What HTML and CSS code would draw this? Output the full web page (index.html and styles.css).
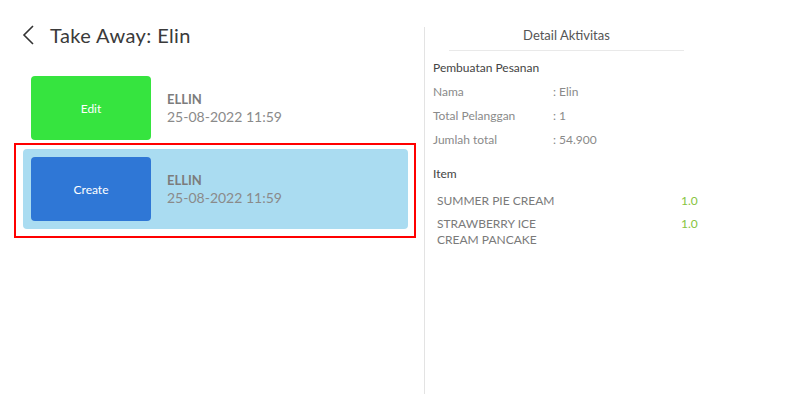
FILE: index.html
```html
<!DOCTYPE html>
<html>
<head>
<meta charset="utf-8">
<link rel="stylesheet" href="styles.css">
</head>
<body>
<div class="page">
  <div class="left">
    <div class="header">
      <svg class="back" width="12" height="20" viewBox="0 0 12 20"><path d="M11 1 L2 10 L11 19" fill="none" stroke="#333" stroke-width="1.6"/></svg>
      <span class="title">Take Away: Elin</span>
    </div>
    <div class="list">
      <div class="card">
        <div class="btn btn-edit">Edit</div>
        <div class="info">
          <div class="name">ELLIN</div>
          <div class="date">25-08-2022 11:59</div>
        </div>
      </div>
      <div class="card selected">
        <div class="btn btn-create">Create</div>
        <div class="info">
          <div class="name">ELLIN</div>
          <div class="date">25-08-2022 11:59</div>
        </div>
      </div>
    </div>
  </div>
  <div class="right">
    <div class="panel-title">Detail Aktivitas</div>
    <div class="section">Pembuatan Pesanan</div>
    <div class="row"><span class="label">Nama</span><span class="value">: Elin</span></div>
    <div class="row"><span class="label">Total Pelanggan</span><span class="value">: 1</span></div>
    <div class="row"><span class="label">Jumlah total</span><span class="value">: 54.900</span></div>
    <div class="section item-head">Item</div>
    <div class="item"><span class="item-name">SUMMER PIE CREAM</span><span class="qty">1.0</span></div>
    <div class="item"><span class="item-name">STRAWBERRY ICE<br>CREAM PANCAKE</span><span class="qty">1.0</span></div>
  </div>
</div>
</body>
</html>
```

FILE: styles.css
```css
* { box-sizing: border-box; }
html, body { margin: 0; padding: 0; background: #fff; }
body { font-family: "Lato", "Noto Sans", sans-serif; width: 790px; height: 394px; overflow: hidden; }
.page { display: flex; height: 394px; }
.left { width: 424px; flex: none; }
.header { display: flex; align-items: center; height: 36px; margin-top: 17px; padding-left: 22px; }
.back { display: block; margin-right: 16px; }
.title { font-size: 20px; color: #3a3a3a; letter-spacing: 0.4px; }
.list { display: flex; flex-direction: column; gap: 1px; margin-top: 15px; width: 385px; margin-left: 23px; }
.card { position: relative; display: flex; align-items: center; padding: 8px; border-radius: 4px; height: 80px; }
.card.selected { background: #aadcf1; }
.card.selected::after { content: ""; position: absolute; top: -6px; left: -9px; right: -8px; bottom: -9px; border: 2px solid #ff0000; }
.btn { width: 120px; height: 64px; border-radius: 4px; display: flex; align-items: center; justify-content: center; color: #fff; font-size: 12px; }
.btn-edit { background: #36e43f; }
.btn-create { background: #2f77d6; }
.info { margin-left: 16px; display: flex; flex-direction: column; }
.name { font-size: 13px; font-weight: 700; color: #7c7c7c; line-height: 17px; }
.date { font-size: 14px; color: #8a8a8a; line-height: 18px; }
.right { flex: 1; border-left: 1px solid #e3e3e3; margin-top: 27px; padding-left: 8px; }
.panel-title { width: 235px; margin-left: 16px; text-align: center; font-size: 13px; color: #555; height: 24px; line-height: 17px; border-bottom: 1px solid #e9e9e9; }
.section { font-size: 12px; color: #444; font-weight: 400; margin-top: 9px; line-height: 16px; }
.row { display: flex; font-size: 12px; color: #8a8a8a; line-height: 16px; margin-top: 8px; }
.label { width: 120px; }
.item-head { margin-top: 18px; }
.item { display: flex; font-size: 12px; color: #7a7a7a; line-height: 16px; padding-left: 4px; margin-top: 11px; }
.item + .item { margin-top: 7px; }
.item-name { width: 244px; }
.qty { color: #86c440; }
```
